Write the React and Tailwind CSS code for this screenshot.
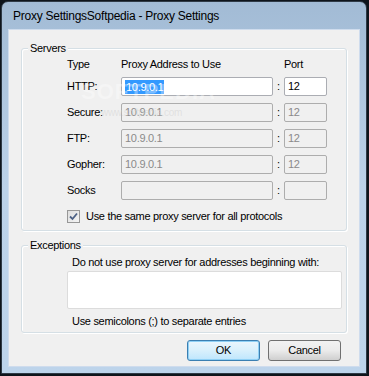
import React from 'react'

function Group({ label, className, children }) {
  return (
    <div className={`relative rounded-[3px] border border-[#d5dfe5] shadow-[inset_1px_1px_0_#ffffff,1px_1px_0_#ffffff] ${className}`}>
      <span className="absolute -top-[8px] left-[6px] bg-[#f0f0f0] px-[2px] leading-[14px]">{label}</span>
      {children}
    </div>
  )
}

function Field({ value, enabled, selected, className = '' }) {
  const base = enabled
    ? 'bg-white border-[#abadb3] text-black'
    : 'bg-[#f0f0f0] border-[#adadad] text-[#8a8a8a]'
  return (
    <div className={`h-[19px] border rounded-[2px] flex items-center pl-[3px] ${base} ${className}`}>
      {selected ? <span className="bg-[#3399ff] text-white px-[1px] leading-[14px]">{value}</span> : value}
    </div>
  )
}

const rows = [
  { label: 'HTTP:', addr: '10.9.0.1', port: '12', enabled: true },
  { label: 'Secure:', addr: '10.9.0.1', port: '12' },
  { label: 'FTP:', addr: '10.9.0.1', port: '12' },
  { label: 'Gopher:', addr: '10.9.0.1', port: '12' },
  { label: 'Socks', addr: '', port: '' },
]

export default function App() {
  return (
    <div className="w-[369px] h-[376px] overflow-hidden bg-[#0e141b] font-['Liberation_Sans',Arial,sans-serif] text-[11px] tracking-[-0.3px] text-black">
      <div className="ml-[1px] mt-[1px] w-[366px] h-[373px] rounded-t-[7px] border border-[#2f3a46] bg-gradient-to-b from-[#a2bbd5] via-[#bcd2e9] to-[#bdd4eb] flex flex-col px-[6px] pb-[6px]">
        {/* title bar */}
        <div className="h-[27px] flex items-center pl-[5px] pt-[1px] text-[12px] tracking-[-0.25px]">Proxy SettingsSoftpedia - Proxy Settings</div>

        {/* client area */}
        <div className="relative flex-1 bg-[#f0f0f0] border border-[#cfdced] flex flex-col px-[12px]">
          <Group label="Servers" className="mt-[18px] h-[183px] pl-[45px] pt-[8px]">
            <div className="grid grid-cols-[54px_152px_11px_43px] items-center gap-y-[7px]">
              <span className="leading-[14px] -mb-[1px]">Type</span>
              <span className="leading-[14px] -mb-[1px]">Proxy Address to Use</span>
              <span />
              <span className="leading-[14px] -mb-[1px]">Port</span>
              {rows.map(r => (
                <React.Fragment key={r.label}>
                  <span>{r.label}</span>
                  <Field value={r.addr} enabled={r.enabled} selected={r.enabled} className={r.enabled ? 'border-[#7eb4ea]' : ''} />
                  <span className="text-center">:</span>
                  <Field value={r.port} enabled={r.enabled} />
                </React.Fragment>
              ))}
            </div>
            <div className="mt-[8px] flex items-center gap-[6px]">
              <div className="w-[13px] h-[13px] border border-[#979797] bg-gradient-to-br from-[#dedede] to-[#f4f4f4] flex items-center justify-center">
                <svg width="9" height="9" viewBox="0 0 9 9">
                  <path d="M1 4.5 L3.5 7 L8 1.5" fill="none" stroke="#4d6185" strokeWidth="1.8" />
                </svg>
              </div>
              <span>Use the same proxy server for all protocols</span>
            </div>
          </Group>

          <Group label="Exceptions" className="mt-[14px] h-[88px] pt-[9px]">
            <div className="pl-[50px] leading-[14px] whitespace-nowrap">Do not use proxy server for addresses beginning with:</div>
            <div className="ml-[45px] mt-[2px] w-[275px] h-[38px] bg-white border border-[#dcdcdc] rounded-[2px]" />
            <div className="pl-[50px] mt-[5px] leading-[14px] whitespace-nowrap">Use semicolons (;) to separate entries</div>
          </Group>

          <div className="mt-[7px] flex justify-end gap-[8px] pr-[6px]">
            <button className="w-[73px] h-[21px] rounded-[3px] border border-[#3c7fb1] bg-gradient-to-b from-[#eaf6fd] via-[#d9f0fc] to-[#bee6fd] shadow-[inset_0_0_0_1px_#8fd0f5]">OK</button>
            <button className="w-[73px] h-[21px] rounded-[3px] border border-[#707070] bg-gradient-to-b from-[#f2f2f2] via-[#ebebeb] to-[#cfcfcf]">Cancel</button>
          </div>

          {/* watermark */}
          <div className="pointer-events-none absolute left-[72px] top-[45px] text-[22px] font-bold tracking-[1px] text-white/35">SOFTPEDIA</div>
          <div className="pointer-events-none absolute left-[92px] top-[75px] text-[10px] text-[#d0d0d0]/50">www.softpedia.com</div>
        </div>
      </div>
    </div>
  )
}
